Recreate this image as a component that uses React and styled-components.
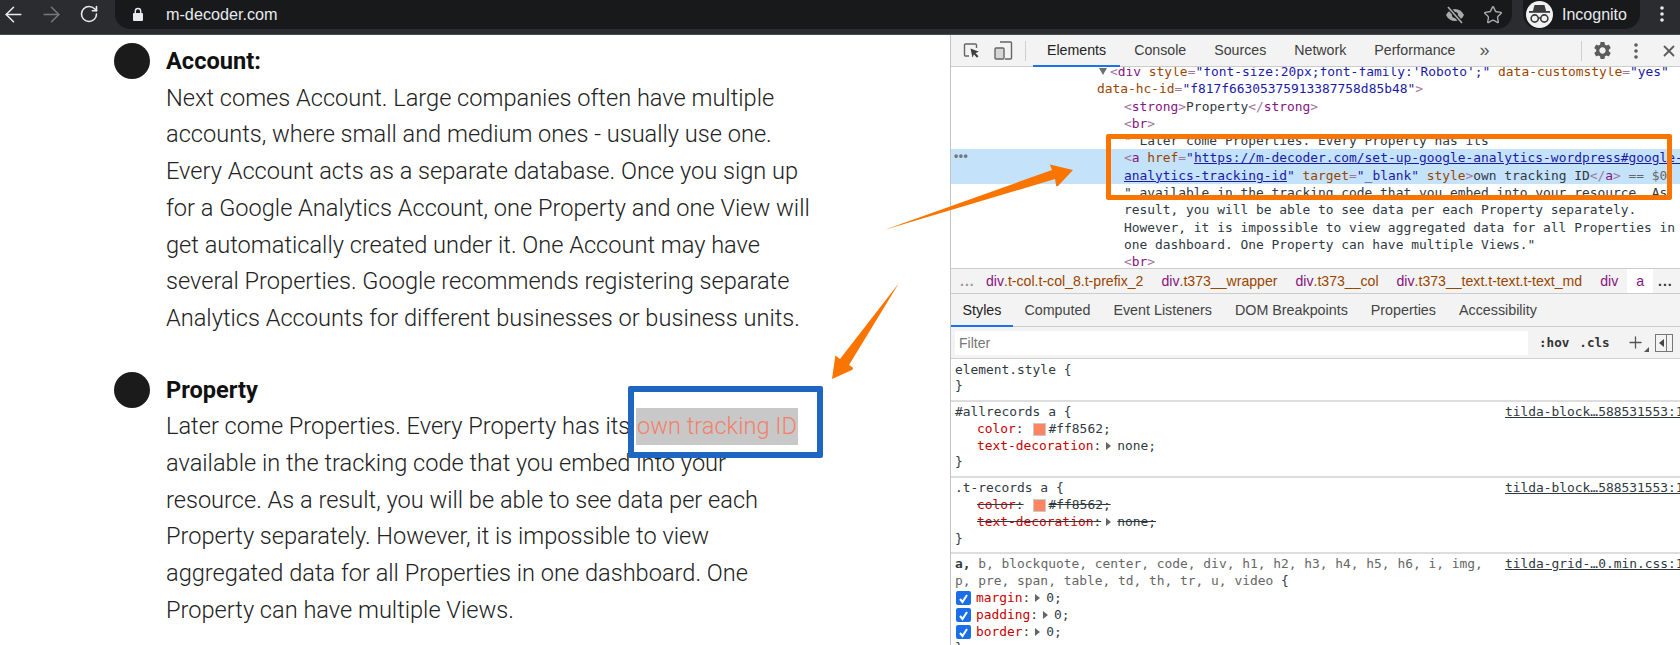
import React from 'react';
import styled, { createGlobalStyle } from 'styled-components';
import { ArrowLeft, ArrowRight, RotateCw, Star, X, Plus } from 'lucide-react';
import { MdSettings } from 'react-icons/md';

const GlobalStyle = createGlobalStyle`
  html, body {
    margin: 0;
    padding: 0;
    background: #ffffff;
    overflow: hidden;
  }
`;

const Page = styled.div`
  position: relative;
  width: 1680px;
  height: 645px;
  overflow: hidden;
  display: flex;
  flex-direction: column;
  font-family: 'Liberation Sans', Arial, sans-serif;
`;

const TopBar = styled.div`
  height: 35px;
  flex: none;
  box-sizing: border-box;
  background: #2b2c2f;
  border-bottom: 1px solid #4a4b4d;
  display: flex;
  align-items: flex-start;
  color: #e8eaed;
`;

const NavGroup = styled.div`
  width: 115px;
  flex: none;
  display: flex;
  gap: 12px;
`;

const NavButton = styled.div`
  width: 26px;
  height: 28px;
  flex: none;
  display: flex;
  align-items: center;
  justify-content: center;
  color: ${(p) => (p.$dim ? '#77787a' : '#e8eaed')};
`;

const AddressPill = styled.div`
  width: 1397px;
  height: 29px;
  flex: none;
  border-radius: 0 0 15px 15px;
  background: #18191b;
  display: flex;
  align-items: center;
  padding: 0 0 0 17px;
  box-sizing: border-box;
`;

const Url = styled.div`
  margin-left: 22px;
  font-size: 16.2px;
  color: #e8eaed;
  flex: 1;
`;

const PillIcon = styled.div`
  width: 38px;
  display: flex;
  justify-content: center;
  color: #a9aaac;
`;

const IncognitoPill = styled.div`
  width: 117px;
  height: 29px;
  margin-left: 11px;
  flex: none;
  border-radius: 0 0 15px 15px;
  background: #18191b;
  display: flex;
  align-items: center;
  padding-left: 3px;
  box-sizing: border-box;
  font-size: 16px;
  gap: 9px;
`;

const Avatar = styled.div`
  width: 27px;
  height: 27px;
  border-radius: 50%;
  background: #f1f1f1;
  display: flex;
  align-items: center;
  justify-content: center;
  flex: none;
`;

const MenuDots = styled.div`
  margin-left: 13px;
  width: 18px;
  height: 28px;
  display: flex;
  align-items: center;
  justify-content: center;
  color: #e8eaed;
`;

const Main = styled.div`
  flex: 1;
  display: flex;
  min-height: 0;
`;

const Article = styled.div`
  width: 950px;
  flex: none;
  box-sizing: border-box;
  padding: 8px 0 0 114px;
  display: flex;
  flex-direction: column;
  gap: 35px;
`;

const Item = styled.div`
  display: flex;
  gap: 16px;
`;

const Bullet = styled.div`
  width: 36px;
  height: 36px;
  flex: none;
  border-radius: 50%;
  background: #1b1b1b;
`;

const ItemBody = styled.div`
  font-family: Roboto, sans-serif;
  font-size: 23.6px;
  font-weight: 300;
  line-height: 36.7px;
  color: #222222;
  white-space: nowrap;
`;

const ItemTitle = styled.div`
  font-weight: 700;
  color: #111111;
`;

const TextLine = styled.div``;

const SelectedLink = styled.span`
  display: inline-block;
  background: #c8c8c8;
  color: #f4806a;
  padding: 0 1px;
`;

const Devtools = styled.div`
  flex: 1;
  min-width: 0;
  border-left: 1px solid #c4c4c4;
  display: flex;
  flex-direction: column;
  color: #303942;
`;

const TabBar = styled.div`
  height: 32px;
  flex: none;
  box-sizing: border-box;
  background: #f3f3f3;
  border-bottom: 1px solid #cccccc;
  display: flex;
  align-items: stretch;
`;

const ToolIcons = styled.div`
  width: 74px;
  flex: none;
  display: flex;
  align-items: center;
  gap: 14px;
  padding-left: 12px;
  box-sizing: border-box;
  color: #5c5c5c;
`;

const Separator = styled.div`
  width: 1px;
  height: 20px;
  flex: none;
  align-self: center;
  background: #cfcfcf;
`;

const ToolSeparator = styled(Separator)`
  margin-right: 7px;
`;

const ActionSeparator = styled(Separator)`
  margin-right: 4px;
`;

const Tab = styled.div`
  padding: 0 14px;
  margin-bottom: -1px;
  display: flex;
  align-items: center;
  font-size: 14.2px;
  color: ${(p) => (p.$active ? '#222222' : '#3d3d3d')};
  border-bottom: 2px solid ${(p) => (p.$active ? '#1a73e8' : 'transparent')};
  box-sizing: border-box;
`;

const More = styled.div`
  margin-left: 0;
  width: 30px;
  display: flex;
  align-items: center;
  justify-content: center;
  color: #555555;
  font-size: 18px;
`;

const TabActions = styled.div`
  margin-left: auto;
  margin-right: -5px;
  display: flex;
  align-items: center;
  color: #5c5c5c;
`;

const ActionIcon = styled.div`
  width: 33px;
  display: flex;
  justify-content: center;
`;

const Tree = styled.div`
  height: 201px;
  flex: none;
  overflow: hidden;
  font-family: 'DejaVu Sans Mono', monospace;
  font-size: 12.9px;
  line-height: 17.3px;
  border-bottom: 1px solid #cccccc;
  background: #ffffff;
`;

const TreeInner = styled.div`
  margin-top: -4px;
`;

const Row = styled.div`
  white-space: pre;
  overflow: hidden;
  height: 17.3px;
  padding-left: ${(p) => p.$indent || 173}px;
  background: ${(p) => (p.$selected ? '#c5e2fb' : 'transparent')};
  position: relative;
`;

const RowDots = styled.span`
  position: absolute;
  left: 3px;
  top: -1px;
  color: #777777;
  font-family: 'Liberation Sans', sans-serif;
  font-weight: 700;
  font-size: 12px;
  letter-spacing: 0.5px;
`;

const Caret = styled.span`
  display: inline-block;
  width: 0;
  height: 0;
  margin: 0 3px 1px 1px;
  border-left: 4px solid transparent;
  border-right: 4px solid transparent;
  border-top: 7px solid #6e6e6e;
`;

const Tag = styled.span`
  color: #881280;
`;

const Punct = styled.span`
  color: #a0799e;
`;

const Attr = styled.span`
  color: #994500;
`;

const Val = styled.span`
  color: #1a1aa6;
`;

const ValLink = styled.span`
  color: #1a1aa6;
  text-decoration: underline;
`;

const Plain = styled.span`
  color: #303942;
`;

const Faint = styled.span`
  color: #666666;
`;

const Crumbs = styled.div`
  height: 25px;
  flex: none;
  box-sizing: border-box;
  background: #f3f3f3;
  border-bottom: 1px solid #cccccc;
  display: flex;
  align-items: stretch;
  font-size: 14.1px;
  white-space: nowrap;
  padding-left: 9px;
`;

const CrumbEdge = styled.div`
  width: 17px;
  flex: none;
  color: ${(p) => (p.$dark ? '#333333' : '#9a9a9a')};
  display: flex;
  align-items: center;
  font-weight: 700;
  letter-spacing: 1px;
`;

const Crumb = styled.div`
  padding: 0 9px;
  display: flex;
  align-items: center;
  background: ${(p) => (p.$current ? '#ffffff' : 'transparent')};
`;

const CrumbTag = styled.span`
  color: #881280;
`;

const CrumbClass = styled.span`
  color: #994500;
`;

const SubTabs = styled.div`
  height: 33px;
  flex: none;
  box-sizing: border-box;
  background: #f3f3f3;
  border-bottom: 1px solid #cccccc;
  display: flex;
  align-items: stretch;
  font-size: 14.3px;
  white-space: nowrap;
`;

const SubTab = styled.div`
  padding: 0 11.5px;
  margin-bottom: -1px;
  box-sizing: border-box;
  display: flex;
  align-items: center;
  color: ${(p) => (p.$active ? '#222222' : '#444444')};
  border-bottom: 2px solid ${(p) => (p.$active ? '#1a73e8' : 'transparent')};
`;

const FilterBar = styled.div`
  height: 32px;
  flex: none;
  box-sizing: border-box;
  background: #f3f3f3;
  border-bottom: 1px solid #d0d0d0;
  display: flex;
  align-items: center;
  padding: 0 0 0 4px;
`;

const FilterInput = styled.div`
  width: 573px;
  height: 24px;
  flex: none;
  box-sizing: border-box;
  padding-left: 4px;
  background: #ffffff;
  display: flex;
  align-items: center;
  font-size: 14px;
  color: #777777;
`;

const FilterAction = styled.div`
  margin-left: ${(p) => p.$gap}px;
  font-family: 'DejaVu Sans Mono', monospace;
  font-weight: 700;
  font-size: 12.6px;
  color: #333333;
`;

const AddRule = styled.div`
  position: relative;
  margin-left: 16px;
  width: 24px;
  display: flex;
  color: #555555;
`;

const AddRuleCorner = styled.div`
  position: absolute;
  right: 1px;
  bottom: 0;
  border-left: 5px solid transparent;
  border-bottom: 5px solid #555555;
`;

const SidebarToggle = styled.div`
  margin-left: 5px;
  width: 18px;
  height: 18px;
  box-sizing: border-box;
  border: 1.5px solid #777777;
  display: flex;
  align-items: center;
  padding-left: 3px;
`;

const ToggleArrow = styled.div`
  border-top: 4px solid transparent;
  border-bottom: 4px solid transparent;
  border-right: 5px solid #444444;
`;

const ToggleDivider = styled.div`
  margin-left: 2px;
  width: 1.5px;
  height: 100%;
  background: #777777;
`;

const Rules = styled.div`
  flex: 1;
  min-height: 0;
  overflow: hidden;
  font-family: 'DejaVu Sans Mono', monospace;
  font-size: 12.9px;
  line-height: 16.8px;
  white-space: pre;
`;

const Rule = styled.div`
  padding: 2.5px 0 4.5px 4px;
  border-bottom: ${(p) => (p.$last ? '0' : '2px solid #dddddd')};
  display: flex;
  justify-content: space-between;
  overflow: hidden;
`;

const RuleBody = styled.div`
  min-width: 0;
`;

const Source = styled.div`
  width: 175px;
  flex: none;
  overflow: hidden;
  color: #303942;
  text-decoration: underline;
`;

const Decl = styled.div`
  display: flex;
  align-items: center;
  padding-left: ${(p) => (p.$check ? 1 : 22)}px;
  text-decoration: ${(p) => (p.$struck ? 'line-through' : 'none')};
`;

const PropName = styled.span`
  color: #c80000;
`;

const Swatch = styled.span`
  width: 11px;
  height: 11px;
  margin: 0 3px 0 9px;
  background: #ff8562;
  border: 1px solid #c9c9c9;
  flex: none;
`;

const Expander = styled.span`
  margin: 0 6px 0 5px;
  border-top: 4px solid transparent;
  border-bottom: 4px solid transparent;
  border-left: 5px solid #666666;
`;

const Check = styled.span`
  width: 15px;
  height: 14px;
  margin-right: 5px;
  border-radius: 2px;
  background: #1a6fe8;
  display: flex;
  align-items: center;
  justify-content: center;
  flex: none;
`;

const BlueFrame = styled.div`
  position: absolute;
  left: 628px;
  top: 386px;
  width: 195px;
  height: 72px;
  box-sizing: border-box;
  border: 6px solid #1f66c1;
  border-radius: 2px;
  pointer-events: none;
`;

const OrangeFrame = styled.div`
  position: absolute;
  left: 1106px;
  top: 134px;
  width: 566px;
  height: 66px;
  box-sizing: border-box;
  border: 5px solid #f97500;
  border-radius: 2px;
  pointer-events: none;
`;

const ArrowsLayer = styled.svg`
  position: absolute;
  left: 0;
  top: 0;
  pointer-events: none;
`;

const ARTICLE = [
  {
    title: 'Account:',
    lines: [
      'Next comes Account. Large companies often have multiple',
      'accounts, where small and medium ones - usually use one.',
      'Every Account acts as a separate database. Once you sign up',
      'for a Google Analytics Account, one Property and one View will',
      'get automatically created under it. One Account may have',
      'several Properties. Google recommends registering separate',
      'Analytics Accounts for different businesses or business units.',
    ],
  },
  {
    title: 'Property',
    lines: [
      <>
        Later come Properties. Every Property has its <SelectedLink>own tracking ID</SelectedLink>
      </>,
      'available in the tracking code that you embed into your',
      'resource. As a result, you will be able to see data per each',
      'Property separately. However, it is impossible to view',
      'aggregated data for all Properties in one dashboard. One',
      'Property can have multiple Views.',
    ],
  },
];

const CRUMBS = [
  ['div', '.t-col.t-col_8.t-prefix_2'],
  ['div', '.t373__wrapper'],
  ['div', '.t373__col'],
  ['div', '.t373__text.t-text.t-text_md'],
  ['div', ''],
];

const SUB_TABS = ['Computed', 'Event Listeners', 'DOM Breakpoints', 'Properties', 'Accessibility'];

const LockIcon = () => (
  <svg width="12" height="15" viewBox="0 0 12 15" fill="none">
    <rect x="1" y="6" width="10" height="8" rx="1" fill="#e8eaed" />
    <path d="M3.3 6V4.2a2.7 2.7 0 0 1 5.4 0V6" stroke="#e8eaed" strokeWidth="1.4" />
  </svg>
);

const EyeOffIcon = () => (
  <svg width="20" height="18" viewBox="0 0 20 18">
    <path d="M1 9c2-4 5.2-6 9-6s7 2 9 6c-2 4-5.2 6-9 6s-7-2-9-6z" fill="currentColor" />
    <circle cx="10" cy="9" r="3" fill="#18191b" />
    <path d="M3 1l14 16" stroke="#18191b" strokeWidth="4" />
    <path d="M3 1l14 16" stroke="currentColor" strokeWidth="1.6" />
  </svg>
);

const IncognitoIcon = () => (
  <svg width="23" height="21" viewBox="0 0 23 21" fill="none">
    <path d="M6.5 1h10l1.6 6H4.9z" fill="#3a3a3c" />
    <rect x="1" y="7" width="21" height="1.8" fill="#3a3a3c" />
    <circle cx="6.7" cy="14.5" r="3.6" stroke="#3a3a3c" strokeWidth="1.6" />
    <circle cx="16.3" cy="14.5" r="3.6" stroke="#3a3a3c" strokeWidth="1.6" />
    <path d="M10.3 14h2.4" stroke="#3a3a3c" strokeWidth="1.6" />
  </svg>
);

const VerticalDots = ({ color = 'currentColor' }) => (
  <svg width="4" height="16" viewBox="0 0 4 16">
    <circle cx="2" cy="2" r="1.8" fill={color} />
    <circle cx="2" cy="8" r="1.8" fill={color} />
    <circle cx="2" cy="14" r="1.8" fill={color} />
  </svg>
);

const InspectIcon = () => (
  <svg width="17" height="17" viewBox="0 0 17 17" fill="none">
    <path d="M6 14H2.5A1 1 0 0 1 1.5 13V3A1 1 0 0 1 2.5 2h10a1 1 0 0 1 1 1v3" stroke="#666666" strokeWidth="1.4" />
    <path d="M7.5 6.5l8.5 3.2-3.5 1.2 3 3.4-1.6 1.4-3-3.4-1.4 3.4z" fill="#3e3e3e" />
  </svg>
);

const DeviceIcon = () => (
  <svg width="19" height="19" viewBox="0 0 19 19" fill="none">
    <path d="M6 1h10.5a1 1 0 0 1 1 1v15a1 1 0 0 1-1 1H11" stroke="#666666" strokeWidth="1.4" />
    <rect x="1" y="7" width="9" height="11" rx="1" fill="#d6d6d6" stroke="#666666" strokeWidth="1.4" />
  </svg>
);

const CheckMark = () => (
  <svg width="11" height="11" viewBox="0 0 11 11" fill="none">
    <path d="M2 6l2.5 3L9 2" stroke="#ffffff" strokeWidth="2" />
  </svg>
);

const App = () => (
  <Page>
    <GlobalStyle />
    <TopBar>
      <NavGroup>
        <NavButton>
          <ArrowLeft size={25} strokeWidth={1.5} />
        </NavButton>
        <NavButton $dim>
          <ArrowRight size={25} strokeWidth={1.5} />
        </NavButton>
        <NavButton>
          <RotateCw size={20} strokeWidth={1.9} />
        </NavButton>
      </NavGroup>
      <AddressPill>
        <LockIcon />
        <Url>m-decoder.com</Url>
        <PillIcon>
          <EyeOffIcon />
        </PillIcon>
        <PillIcon>
          <Star size={20} strokeWidth={1.7} />
        </PillIcon>
      </AddressPill>
      <IncognitoPill>
        <Avatar>
          <IncognitoIcon />
        </Avatar>
        Incognito
      </IncognitoPill>
      <MenuDots>
        <VerticalDots />
      </MenuDots>
    </TopBar>

    <Main>
      <Article>
        {ARTICLE.map((item) => (
          <Item key={item.title}>
            <Bullet />
            <ItemBody>
              <ItemTitle>{item.title}</ItemTitle>
              {item.lines.map((line, i) => (
                <TextLine key={i}>{line}</TextLine>
              ))}
            </ItemBody>
          </Item>
        ))}
      </Article>

      <Devtools>
        <TabBar>
          <ToolIcons>
            <InspectIcon />
            <DeviceIcon />
          </ToolIcons>
          <ToolSeparator />
          <Tab $active>Elements</Tab>
          <Tab>Console</Tab>
          <Tab>Sources</Tab>
          <Tab>Network</Tab>
          <Tab>Performance</Tab>
          <More>»</More>
          <TabActions>
            <ActionSeparator />
            <ActionIcon>
              <MdSettings size={21} />
            </ActionIcon>
            <ActionIcon>
              <VerticalDots />
            </ActionIcon>
            <ActionIcon>
              <X size={18} strokeWidth={2.4} />
            </ActionIcon>
          </TabActions>
        </TabBar>

        <Tree>
          <TreeInner>
            <Row $indent={147}>
              <Caret />
              <Punct>&lt;</Punct>
              <Tag>div</Tag> <Attr>style</Attr>
              <Punct>=</Punct>
              <Val>"font-size:20px;font-family:'Roboto';"</Val> <Attr>data-customstyle</Attr>
              <Punct>=</Punct>
              <Val>"yes"</Val>
            </Row>
            <Row $indent={146}>
              <Attr>data-hc-id</Attr>
              <Punct>=</Punct>
              <Val>"f817f66305375913387758d85b48"</Val>
              <Punct>&gt;</Punct>
            </Row>
            <Row>
              <Punct>&lt;</Punct>
              <Tag>strong</Tag>
              <Punct>&gt;</Punct>
              <Plain>Property</Plain>
              <Punct>&lt;/</Punct>
              <Tag>strong</Tag>
              <Punct>&gt;</Punct>
            </Row>
            <Row>
              <Punct>&lt;</Punct>
              <Tag>br</Tag>
              <Punct>&gt;</Punct>
            </Row>
            <Row>
              <Plain>" Later come Properties. Every Property has its </Plain>
            </Row>
            <Row $selected>
              <RowDots>•••</RowDots>
              <Punct>&lt;</Punct>
              <Tag>a</Tag> <Attr>href</Attr>
              <Punct>=</Punct>
              <Val>"</Val>
              <ValLink>https://m-decoder.com/set-up-google-analytics-wordpress#google-</ValLink>
            </Row>
            <Row $selected>
              <ValLink>analytics-tracking-id</ValLink>
              <Val>"</Val> <Attr>target</Attr>
              <Punct>=</Punct>
              <Val>"_blank"</Val> <Attr>style</Attr>
              <Punct>&gt;</Punct>
              <Plain>own tracking ID</Plain>
              <Punct>&lt;/</Punct>
              <Tag>a</Tag>
              <Punct>&gt;</Punct> <Faint>== $0</Faint>
            </Row>
            <Row>
              <Plain>" available in the tracking code that you embed into your resource. As</Plain>
            </Row>
            <Row>
              <Plain>result, you will be able to see data per each Property separately.</Plain>
            </Row>
            <Row>
              <Plain>However, it is impossible to view aggregated data for all Properties in</Plain>
            </Row>
            <Row>
              <Plain>one dashboard. One Property can have multiple Views."</Plain>
            </Row>
            <Row>
              <Punct>&lt;</Punct>
              <Tag>br</Tag>
              <Punct>&gt;</Punct>
            </Row>
          </TreeInner>
        </Tree>

        <Crumbs>
          <CrumbEdge>...</CrumbEdge>
          {CRUMBS.map(([tag, cls]) => (
            <Crumb key={tag + cls}>
              <CrumbTag>{tag}</CrumbTag>
              <CrumbClass>{cls}</CrumbClass>
            </Crumb>
          ))}
          <Crumb $current>
            <CrumbTag>a</CrumbTag>
          </Crumb>
          <CrumbEdge $dark>&nbsp;...</CrumbEdge>
        </Crumbs>

        <SubTabs>
          <SubTab $active>Styles</SubTab>
          {SUB_TABS.map((name) => (
            <SubTab key={name}>{name}</SubTab>
          ))}
        </SubTabs>

        <FilterBar>
          <FilterInput>Filter</FilterInput>
          <FilterAction $gap={11}>:hov</FilterAction>
          <FilterAction $gap={10}>.cls</FilterAction>
          <AddRule>
            <Plus size={19} strokeWidth={1.6} />
            <AddRuleCorner />
          </AddRule>
          <SidebarToggle>
            <ToggleArrow />
            <ToggleDivider />
          </SidebarToggle>
        </FilterBar>

        <Rules>
          <Rule>
            <RuleBody>
              <div>element.style {'{'}</div>
              <div>{'}'}</div>
            </RuleBody>
          </Rule>
          <Rule>
            <RuleBody>
              <div>#allrecords a {'{'}</div>
              <Decl>
                <PropName>color</PropName>:<Swatch />#ff8562;
              </Decl>
              <Decl>
                <PropName>text-decoration</PropName>:<Expander />none;
              </Decl>
              <div>{'}'}</div>
            </RuleBody>
            <Source>tilda-block…588531553:1</Source>
          </Rule>
          <Rule>
            <RuleBody>
              <div>.t-records a {'{'}</div>
              <Decl $struck>
                <PropName>color</PropName>:<Swatch />#ff8562;
              </Decl>
              <Decl $struck>
                <PropName>text-decoration</PropName>:<Expander />none;
              </Decl>
              <div>{'}'}</div>
            </RuleBody>
            <Source>tilda-block…588531553:1</Source>
          </Rule>
          <Rule $last>
            <RuleBody>
              <div>
                <b>a,</b> <Faint>b, blockquote, center, code, div, h1, h2, h3, h4, h5, h6, i, img,</Faint>
              </div>
              <div>
                <Faint>p, pre, span, table, td, th, tr, u, video</Faint> {'{'}
              </div>
              <Decl $check>
                <Check>
                  <CheckMark />
                </Check>
                <PropName>margin</PropName>:<Expander />0;
              </Decl>
              <Decl $check>
                <Check>
                  <CheckMark />
                </Check>
                <PropName>padding</PropName>:<Expander />0;
              </Decl>
              <Decl $check>
                <Check>
                  <CheckMark />
                </Check>
                <PropName>border</PropName>:<Expander />0;
              </Decl>
              <div>{'}'}</div>
            </RuleBody>
            <Source>tilda-grid-…0.min.css:1</Source>
          </Rule>
        </Rules>
      </Devtools>
    </Main>

    <BlueFrame />
    <OrangeFrame />
    <ArrowsLayer width="1680" height="645" viewBox="0 0 1680 645">
      <path
        d="M884 230 L1052 170 L1050 165 Q1049 164 1052 165 L1073 170 L1058 186 Q1056 187 1056 185 L1055 179 Z"
        fill="#f97500"
      />
      <path
        d="M899 283 L840 359 L836 356 Q835 355 835 358 L832 379 L852 370 Q854 368 852 367 L849 365 Z"
        fill="#f97500"
      />
    </ArrowsLayer>
  </Page>
);

export default App;
